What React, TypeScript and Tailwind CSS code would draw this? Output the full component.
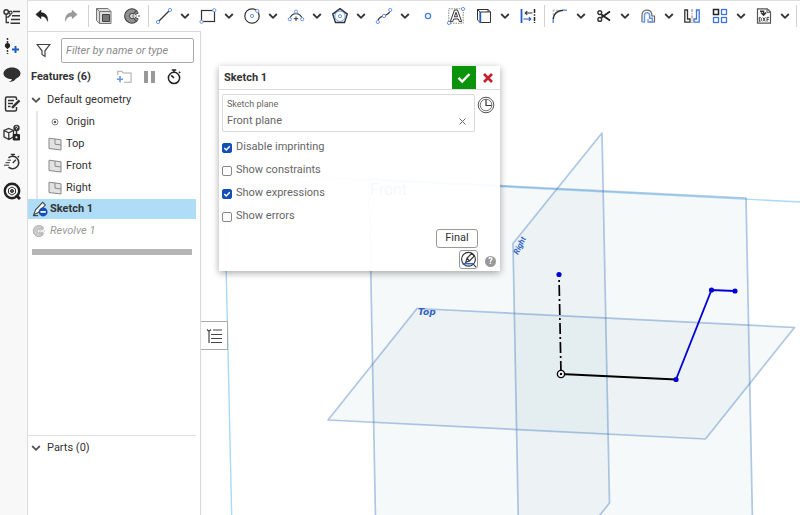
import React, { useState } from 'react';

type IconProps = { children: React.ReactNode; size?: number; className?: string };

function Icon({ children, size = 18, className = '' }: IconProps) {
  return (
    <svg
      width={size}
      height={size}
      viewBox="0 0 18 18"
      fill="none"
      stroke="#333"
      strokeWidth="1.2"
      aria-hidden="true"
      className={`shrink-0 ${className}`}
    >
      {children}
    </svg>
  );
}

const BLUE = '#6a97e6';

function Node({ x, y }: { x: number; y: number }) {
  return <circle cx={x} cy={y} r="1.6" fill="#fff" stroke={BLUE} strokeWidth="1" />;
}

function Chevron({ className = '' }: { className?: string }) {
  return (
    <svg width="10" height="8" viewBox="0 0 10 8" fill="none" stroke="currentColor" strokeWidth="1.8" aria-hidden="true" className={className}>
      <path d="M1.2 2 5 5.8 8.8 2" />
    </svg>
  );
}

function Tool({ label, children, menu = false }: { label: string; children: React.ReactNode; menu?: boolean }) {
  return (
    <div className={menu ? 'flex shrink-0 pr-0.5' : 'flex shrink-0'}>
      <button type="button" aria-label={label} className="flex h-7 w-7 items-center justify-center">
        {children}
      </button>
      {menu && (
        <button type="button" aria-label={`${label} options`} className="flex h-7 w-3.5 items-center justify-center text-[#333]">
          <Chevron />
        </button>
      )}
    </div>
  );
}

function Separator() {
  return <div className="mr-px ml-0.5 h-[22px] w-px shrink-0 bg-[#d2d2d2]" />;
}

function RevolveGlyph({ color = '#444', fill = '#8f8f8f' }: { color?: string; fill?: string }) {
  return (
    <>
      <path d="M13.6 3.6A7.2 7.2 0 1 0 13.6 14.4L10.4 10.9A2.4 2.4 0 1 1 10.4 7.1Z" fill={fill} stroke={color} strokeWidth="1.1" />
      <path d="M8.500 9H17" stroke={color} strokeDasharray="3 1.200 1 1.200" strokeWidth="1" />
      <path d="M10.4 7.1 13.6 3.6 15.2 6.2 12 7.600M10.4 10.9 13.6 14.4 15.2 11.800 12 10.400" fill={fill} stroke={color} strokeWidth="1" />
    </>
  );
}

function Toolbar() {
  return (
    <div role="toolbar" aria-label="Sketch tools" className="flex h-[31px] shrink-0 items-center overflow-hidden border-t border-[#dedede] bg-white">
      <div className="flex gap-px pr-px">
        <Tool label="Undo">
          <Icon><path d="M8 3 2.800 7.400 8 11.800V9.200C11.300 9 13.200 10.500 14.600 14.300 15.200 9 12.400 5.800 8 5.600Z" fill="#222" stroke="#222" strokeWidth="0.5" /></Icon>
        </Tool>
        <Tool label="Redo">
          <Icon><path d="M10 3 15.200 7.400 10 11.800V9.200C6.700 9 4.800 10.500 3.400 14.300 2.800 9 5.600 5.800 10 5.600Z" fill="#999" stroke="#999" strokeWidth="0.5" /></Icon>
        </Tool>
      </div>
      <Separator />
      <Tool label="Extrude">
        <Icon>
          <path d="M1.500 1.500H13L16 4.500V16.500H4.500L1.500 13.500Z" fill="#ddd" stroke="#777" strokeWidth="1" />
          <path d="M1.500 1.500 4.500 4.500H16M4.500 4.500V16.500" stroke="#777" strokeWidth="1" />
          <path d="M7.500 7.500H14.500V14.500H7.500Z" fill="#777" stroke="#444" strokeWidth="1" />
        </Icon>
      </Tool>
      <Tool label="Revolve"><Icon><RevolveGlyph /></Icon></Tool>
      <Separator />
      <Tool label="Line" menu>
        <Icon><path d="M3.500 14.500 14.500 3.500" /><Node x={3} y={15} /><Node x={15} y={3} /></Icon>
      </Tool>
      <Tool label="Rectangle" menu>
        <Icon><rect x="2.500" y="3.500" width="13" height="11" /><Node x={2.5} y={14.8} /><Node x={15.3} y={3.2} /></Icon>
      </Tool>
      <Tool label="Circle" menu>
        <Icon><circle cx="9" cy="9" r="7.200" /><Node x={9} y={9} /><Node x={14.3} y={4} /></Icon>
      </Tool>
      <Tool label="Arc" menu>
        <Icon><path d="M2.800 12A6.400 7 0 0 1 15.200 12" /><path d="M9 9.500V14M6.800 11.700H11.200" strokeWidth="1" /><Node x={2.8} y={12.2} /><Node x={15.2} y={12.2} /><Node x={9} y={4.7} /></Icon>
      </Tool>
      <Tool label="Polygon" menu>
        <Icon><path d="M9 1.600 16.300 7.100 13.500 15.500H4.500L1.700 7.100Z" strokeWidth="1.400" /><circle cx="9" cy="9.200" r="5.200" stroke={BLUE} strokeWidth="1" /><Node x={9} y={9.2} /></Icon>
      </Tool>
      <Tool label="Spline" menu>
        <Icon><path d="M3 14.500C3 9.500 7 9.800 9 8.800S14.800 7 15 3.500" /><Node x={2.8} y={15} /><Node x={9} y={9} /><Node x={15.2} y={3} /></Icon>
      </Tool>
      <Tool label="Point">
        <Icon><circle cx="9" cy="9" r="2.600" stroke="#4a7ddc" strokeWidth="1.300" /></Icon>
      </Tool>
      <Tool label="Text">
        <Icon>
          <rect x="1.800" y="1.800" width="14.400" height="14.400" stroke="#777" strokeDasharray="1.500 1" strokeWidth="0.900" />
          <path d="M3.300 14.600 7.500 3H10.500L14.700 14.600H12.300L11.400 12H6.600L5.700 14.600ZM7.400 9.800H10.600L9 5.400Z" fill="#fff" strokeWidth="1" />
          <Node x={16} y={2} /><Node x={2} y={16} />
        </Icon>
      </Tool>
      <Tool label="Use" menu>
        <Icon>
          <path d="M2.500 2.500H13L15.500 4.800V15.500H5.200L2.500 13ZM2.500 2.500 5.200 5H15.500M13 2.500V5" strokeWidth="1" />
          <path d="M5.300 5V15.500" stroke="#2458c5" strokeWidth="1.800" />
        </Icon>
      </Tool>
      <Tool label="Dimension">
        <Icon>
          <path d="M2.500 2V16" stroke="#2458c5" strokeWidth="1.800" />
          <path d="M15.500 2V16" stroke="#222" strokeWidth="1.500" strokeDasharray="4 1.200 1.500 1.200" />
          <path d="M13.500 6H6M8.200 4.200 6.200 6 8.200 7.800" strokeWidth="1.100" />
          <path d="M4.500 12H12M9.800 10.200 11.800 12 9.800 13.800" stroke="#2458c5" strokeWidth="1.100" />
        </Icon>
      </Tool>
      <Separator />
      <Tool label="Fillet" menu>
        <Icon>
          <path d="M2.200 12C2.600 6.500 6 3.600 12.500 3.200" strokeWidth="1.600" />
          <path d="M12 3.200H16M2.200 12V16" stroke={BLUE} strokeWidth="1.600" />
          <path d="M2.200 3.200H8M2.200 3.200V8" stroke="#999" strokeWidth="1" strokeDasharray="1.500 1.500" />
        </Icon>
      </Tool>
      <Tool label="Trim" menu>
        <Icon>
          <path d="M6 7.200 15 13.500M6 10.800 15 4.500" strokeWidth="1.900" stroke="#222" />
          <circle cx="4.800" cy="5.600" r="1.900" strokeWidth="1.400" /><circle cx="4.800" cy="12.400" r="1.900" strokeWidth="1.400" />
        </Icon>
      </Tool>
      <Tool label="Offset" menu>
        <Icon>
          <path d="M3 15V7.500A5 5 0 0 1 12.800 6.800V9H15.500V15H9.800" stroke="#666" strokeWidth="1.200" />
          <path d="M5.500 15V7.800A2.600 2.600 0 0 1 10.600 7.800V11.200H13.300V14" stroke={BLUE} strokeWidth="1.500" />
          <path d="M3 15H6M9 12V15H14" stroke={BLUE} strokeWidth="1.300" />
        </Icon>
      </Tool>
      <Tool label="Mirror">
        <Icon>
          <path d="M1.800 3H4.500V12H7V15.200H1.800Z" stroke="#333" strokeWidth="1.300" />
          <path d="M9 2V16" stroke="#777" strokeWidth="1" strokeDasharray="3 1.200 1 1.200" />
          <path d="M16.200 3H13.500V12H11V15.200H16.200Z" stroke="#3f74d8" strokeWidth="1.300" />
        </Icon>
      </Tool>
      <Tool label="Pattern" menu>
        <Icon>
          <rect x="2.500" y="2.500" width="5" height="5" stroke="#222" strokeWidth="1.500" />
          <rect x="10.500" y="2.500" width="5" height="5" stroke="#3f74d8" strokeWidth="1.300" />
          <rect x="2.500" y="10.500" width="5" height="5" stroke="#3f74d8" strokeWidth="1.300" />
          <rect x="10.500" y="10.500" width="5" height="5" stroke="#3f74d8" strokeWidth="1.300" />
        </Icon>
      </Tool>
      <Tool label="Insert DXF" menu>
        <Icon>
          <path d="M2.500 1.800H12.300L15.500 5V16.200H2.500Z" stroke="#555" />
          <path d="M12 2V5.300H15.300" stroke="#555" strokeWidth="1" />
          <path d="M5 4.200H8.600V7.500M6 5.500 8.600 8.200 11.200 5.500" strokeWidth="1.400" />
          <path d="M4.300 10.400V14.400H5.300L6.300 13.400V11.400L5.300 10.400ZM7.800 10.400 10.300 14.400M10.300 10.400 7.800 14.400M12 14.600V10.400H14.200M12 12.400H13.800" strokeWidth="0.900" />
        </Icon>
      </Tool>
      <Separator />
    </div>
  );
}

function RailButton({ label, children }: { label: string; children: React.ReactNode }) {
  return (
    <button type="button" aria-label={label} className="flex h-[29px] w-6 items-center justify-center">
      {children}
    </button>
  );
}

function Rail() {
  return (
    <nav aria-label="Document panels" className="flex w-7 shrink-0 flex-col border-r border-[#dcdcdc] bg-[#f8f8f8] pt-0.5">
      <RailButton label="Feature list">
        <Icon>
          <circle cx="3.200" cy="4" r="2.200" strokeWidth="1.500" /><circle cx="7.600" cy="4.600" r="1.500" strokeWidth="1.200" />
          <path d="M3.200 6.200V14.500H6M3.200 9.200H5.200L7.600 6.500" strokeWidth="1.300" />
          <path d="M10 3.500H17M9 7.800H17M8 11.600H17M7.500 15.200H17" strokeWidth="1.500" />
        </Icon>
      </RailButton>
      <RailButton label="Insert version">
        <Icon>
          <path d="M4.500 1V17" strokeDasharray="2 1" strokeWidth="1.500" /><circle cx="4.500" cy="8.500" r="2.600" fill="#222" stroke="none" />
          <path d="M12.500 9V16M9 12.500H16" stroke="#1b5cc4" strokeWidth="1.900" />
        </Icon>
      </RailButton>
      <RailButton label="Comments">
        <Icon><path d="M9 1.500C4.300 1.500 0.500 4.200 0.500 7.600 0.500 10.800 4.300 13.200 9 13.200 8.600 14.800 7 15.500 5.600 15.800 9 16.200 11.800 15 12.800 12.800 15.400 11.800 17.500 9.900 17.500 7.600 17.500 4.200 13.700 1.500 9 1.500Z" fill="#303030" stroke="none" /></Icon>
      </RailButton>
      <RailButton label="Notes">
        <Icon>
          <path d="M13.500 5V3.500Q13.500 2 12 2H4Q2.500 2 2.500 3.500V14.500Q2.500 16 4 16H12Q13.500 16 13.500 14.500V12" strokeWidth="1.500" />
          <path d="M5 5.500H11M5 8.500H10M5 11.500H7.500" strokeWidth="1.300" />
          <path d="M9 12.800 16.500 5.300" strokeWidth="2.400" />
        </Icon>
      </RailButton>
      <RailButton label="Part properties">
        <Icon>
          <path d="M5.800 4.500 10.500 6.500V12.800L5.800 15.500 1 12.800V6.500ZM1 6.500 5.800 8.800 10.500 6.500M5.800 8.800V15.500" strokeWidth="1.300" />
          <rect x="9.800" y="10" width="7.200" height="6.500" rx="1" fill="#222" stroke="none" /><circle cx="13.400" cy="13.300" r="1.100" fill="#fff" stroke="none" />
          <circle cx="13.500" cy="4" r="3.200" fill="#333" stroke="none" />
          <path d="M12.300 3.300Q12.400 2.300 13.500 2.300 14.700 2.400 14.600 3.400 14.500 4.100 13.500 4.500V5.300" stroke="#fff" strokeWidth="0.900" />
          <path d="M13.500 7V10" strokeWidth="1.500" />
        </Icon>
      </RailButton>
      <RailButton label="Timer">
        <Icon>
          <path d="M5.500 4.800A6.200 6.200 0 1 1 5.500 14.200" strokeWidth="1.600" />
          <path d="M9.800 1.300V3.500M7.800 1.400H12M14.800 3 16 4.200M9.800 10 12.800 6.800" strokeWidth="1.400" />
          <path d="M4.500 7.200H8M2.500 9.700H6.800M1 12.200H6" strokeWidth="1" />
        </Icon>
      </RailButton>
      <RailButton label="Learning center">
        <Icon>
          <circle cx="9" cy="9" r="7.200" strokeWidth="2.400" stroke="#222" /><path d="M13 13 17 17" stroke="#222" strokeWidth="3" />
          <path d="M5.500 7 9 5 12.500 7V11L9 13 5.500 11Z" strokeWidth="1" /><circle cx="9" cy="9" r="1.500" fill="#555" strokeWidth="1" />
        </Icon>
      </RailButton>
    </nav>
  );
}

function PlaneIcon() {
  return (
    <svg width="14" height="14" viewBox="0 0 14 14" fill="#e2e2e2" stroke="#888" aria-hidden="true" className="shrink-0">
      <path d="M1 1.200 13 2.800V13L1 11.500Z" />
      <path d="M7 2V7.200L13 8" fill="none" />
    </svg>
  );
}

function GeometryRow({ icon, label }: { icon: React.ReactNode; label: string }) {
  return (
    <li className="flex h-[22px] items-center gap-[3px] pl-[9px]">
      <span className="flex w-4 justify-center">{icon}</span>
      {label}
    </li>
  );
}

function FeaturePanel() {
  return (
    <aside className="flex w-[173px] shrink-0 flex-col border-t border-r border-[#d8d8d8] bg-white pr-1 text-[11px] text-[#333]">
      <div className="flex h-[37px] items-center gap-2.5 pl-2">
        <svg width="15" height="15" viewBox="0 0 15 15" fill="none" stroke="#444" strokeWidth="1.200" aria-hidden="true" className="shrink-0">
          <path d="M1.200 1.500H13.800L9 7.800V13.500L6 11.500V7.800Z" />
        </svg>
        <input
          type="text"
          aria-label="Filter features"
          placeholder="Filter by name or type"
          className="h-[25px] w-[133px] rounded-xs border border-[#aaa] px-1 italic outline-none placeholder:text-[#8b8b8b]"
        />
      </div>
      <div className="flex h-5 items-start pl-[3px]">
        <h2 className="w-[85px] leading-4 font-bold">Features (6)</h2>
        <div className="flex items-center gap-[9px]">
          <button type="button" aria-label="Create folder">
            <Icon size={16}>
              <path d="M2 7V2.500H6.500L8 4.500H17V15H9" stroke="#aaa" /><path d="M4.500 8V15M1 11.500H8" stroke="#6d98e6" strokeWidth="1.800" />
            </Icon>
          </button>
          <button type="button" aria-label="Suppress" className="flex h-4 w-4 items-center justify-center gap-[3px]">
            <span className="h-3 w-1 bg-[#999]" /><span className="h-3 w-1 bg-[#999]" />
          </button>
          <button type="button" aria-label="Regeneration times">
            <Icon size={16}>
              <circle cx="9" cy="10" r="6.300" stroke="#222" strokeWidth="1.700" />
              <path d="M9 1V4M6.500 1.200H11.500M14.500 3 16 4.500M9 10 5.800 7.200" stroke="#222" strokeWidth="1.700" />
            </Icon>
          </button>
        </div>
      </div>
      <div className="flex-1">
        <button type="button" aria-expanded="true" className="flex h-[22px] items-center gap-1.5 pl-[3px]">
          <Chevron className="text-[#555]" />
          Default geometry
        </button>
        <ul className="ml-2 border-l-2 border-[#e6e6e6]">
          <GeometryRow
            label="Origin"
            icon={<svg width="8" height="8" viewBox="0 0 8 8" fill="none" stroke="#888" aria-hidden="true"><circle cx="4" cy="4" r="3" /><circle cx="4" cy="4" r="1.200" fill="#555" stroke="none" /></svg>}
          />
          <GeometryRow label="Top" icon={<PlaneIcon />} />
          <GeometryRow label="Front" icon={<PlaneIcon />} />
          <GeometryRow label="Right" icon={<PlaneIcon />} />
        </ul>
        <div className="flex h-5 items-center gap-0.5 bg-[#afdcf6] pl-1 font-bold">
          <Icon size={16}>
            <path d="M2 15.500 4 10 12 1.500 15 4.500 7 13Z" fill="#fff" stroke="#444" /><path d="M1 16.500H7" />
            <circle cx="12.500" cy="12.300" r="5" fill="#1450b4" stroke="none" /><path d="M9.500 12.300H15.500" stroke="#fff" strokeWidth="2" />
          </Icon>
          Sketch 1
        </div>
        <div className="flex h-6 items-center gap-1 pl-1 text-[#999] italic">
          <Icon size={14}><RevolveGlyph color="#aaa" fill="#ccc" /></Icon>
          Revolve 1
        </div>
        <div className="mt-1.5 ml-1 h-1.5 w-40 bg-[#b5b5b5]" />
      </div>
      <div className="h-20 border-t border-[#dedede]">
        <button type="button" aria-expanded="true" className="flex h-6 items-center gap-1.5 pl-[3px]">
          <Chevron className="text-[#555]" />
          Parts (0)
        </button>
      </div>
    </aside>
  );
}

function Scene() {
  return (
    <svg aria-label="Sketch view" className="absolute inset-0 h-full w-full">
      <g transform="translate(-201 -31)">
        <path d="M800 202 224 172.500 232 530" fill="none" stroke="#a8daf5" strokeWidth="1.400" />
        <g fill="#2c7896" fillOpacity="0.042" stroke="#3f78bd" strokeOpacity="0.4" strokeWidth="1.700" strokeLinejoin="round">
          <path d="M369 179 746 198 753 545H376Z" />
          <path d="M602 133 513 243.500 518.500 530 588 530 609.500 503Z" />
          <path d="M417 308.500 328 420 705.500 439 794.500 327.500Z" />
        </g>
        <g fill="#2f62c0" fontFamily="Roboto, sans-serif">
          <text x="370" y="195" fontSize="16">Front</text>
          <text x="228" y="190" fontSize="15" fillOpacity="0.25">Sketch 1</text>
          <text x="418" y="315" fontSize="9" fontStyle="italic" fontWeight="700" fontFamily="DejaVu Sans, sans-serif">Top</text>
          <text transform="translate(518 255) rotate(-64)" fontSize="8" fontWeight="700" fontStyle="italic">Right</text>
        </g>
        <path d="M559 275 561 374" stroke="#000" strokeWidth="1.700" strokeDasharray="0 5 2 3 11 3 2 3 11 3 2 3 11 3 2 3 11 3 2 3 11 3 2 3 11" />
        <path d="M561 374 676 379.500" stroke="#000" strokeWidth="1.800" />
        <path d="M676 379.500 711.500 290 735 291" fill="none" stroke="#0000d6" strokeWidth="1.800" />
        <g fill="#0000d6">
          <circle cx="559" cy="274.500" r="2.600" />
          <circle cx="676" cy="379.500" r="2.600" />
          <circle cx="711.500" cy="290" r="2.600" />
          <circle cx="735" cy="291" r="2.600" />
        </g>
        <circle cx="561" cy="374" r="3.600" fill="#fff" stroke="#000" strokeWidth="1.400" />
        <circle cx="561" cy="374" r="1.200" />
      </g>
    </svg>
  );
}

function Option({ label, initial = false }: { label: string; initial?: boolean }) {
  const [checked, setChecked] = useState(initial);
  return (
    <label className="flex h-[23px] items-center gap-1">
      <span className="grid h-2.5 w-2.5">
        <input
          type="checkbox"
          checked={checked}
          onChange={() => setChecked(!checked)}
          className="col-start-1 row-start-1 block h-2.5 w-2.5 appearance-none rounded-[2px] border border-[#888] bg-white checked:border-[#1450b4] checked:bg-[#1450b4]"
        />
        {checked && (
          <svg width="10" height="10" viewBox="0 0 10 10" fill="none" stroke="#fff" strokeWidth="1.500" aria-hidden="true" className="pointer-events-none col-start-1 row-start-1">
            <path d="M2.300 5 4.300 7 7.800 3.200" />
          </svg>
        )}
      </span>
      {label}
    </label>
  );
}

function SketchDialog() {
  return (
    <section aria-label="Sketch 1" className="absolute top-[35px] left-[18px] w-[281px] bg-white/95 text-[11px] text-[#666] shadow-[0_2px_7px_rgba(0,0,0,0.35)]">
      <header className="flex h-6 items-center border-b border-[#dcdcdc] bg-white">
        <h2 className="flex-1 pt-0.5 pl-[5px] font-bold text-[#333]">Sketch 1</h2>
        <button type="button" aria-label="Accept" className="flex h-[23px] w-6 items-center justify-center bg-[#0b930b]">
          <svg width="14" height="12" viewBox="0 0 14 12" fill="none" stroke="#fff" strokeWidth="2.400" aria-hidden="true"><path d="M1.500 5.800 5.200 9.500 12.500 2" /></svg>
        </button>
        <button type="button" aria-label="Cancel" className="flex h-[23px] w-6 items-center justify-center">
          <svg width="10" height="10" viewBox="0 0 10 10" stroke="#c4202c" strokeWidth="2.600" aria-hidden="true"><path d="M1 1 9 9M9 1 1 9" /></svg>
        </button>
      </header>
      <div className="flex gap-0.5 pt-1 pl-[3px]">
        <div className="flex h-[38px] w-[253px] flex-col rounded-xs border border-[#dadada] bg-white px-1 pt-0.5">
          <label htmlFor="sketch-plane" className="text-[9px] leading-[14px]">Sketch plane</label>
          <div className="flex h-5 items-center">
            <input id="sketch-plane" type="text" defaultValue="Front plane" className="min-w-0 flex-1 outline-none" />
            <button type="button" aria-label="Clear sketch plane" className="flex h-4 w-4 items-center justify-center">
              <svg width="7" height="7" viewBox="0 0 7 7" stroke="#666" aria-hidden="true"><path d="M0.500 0.500 6.500 6.500M6.500 0.500 0.500 6.500" /></svg>
            </button>
          </div>
        </div>
        <button type="button" aria-label="Sketch history" className="h-[22px]">
          <Icon>
            <circle cx="9" cy="9" r="7.800" strokeWidth="1" stroke="#555" /><circle cx="9" cy="9" r="5.800" strokeWidth="0.900" stroke="#666" />
            <path d="M9 3.500V9.500H14.500" strokeWidth="1.200" />
          </Icon>
        </button>
      </div>
      <div className="pt-1 pl-[3px]">
        <Option label="Disable imprinting" initial />
        <Option label="Show constraints" />
        <Option label="Show expressions" initial />
        <Option label="Show errors" />
      </div>
      <div className="flex flex-col items-end gap-0.5 pt-px pr-1 pb-0.5">
        <button type="button" className="mr-[18px] h-[19px] w-[42px] rounded-[3px] border border-[#999] bg-white text-[#333]">Final</button>
        <div className="flex items-center gap-[7px]">
          <button type="button" aria-label="Look normal to sketch" className="flex h-[19px] w-[19px] items-center justify-center rounded-[3px] border border-[#999] bg-white">
            <Icon size={17}>
              <circle cx="9" cy="8.700" r="7.300" strokeWidth="1.200" />
              <path d="M6 12 7.500 7.500 12.500 2.500 15 5.500 10 10.500ZM7.500 7.500 10 10.500M14 14 17 17" />
              <path d="M2.500 13.500H15" stroke="#2a5fd0" strokeWidth="1.500" />
            </Icon>
          </button>
          <button type="button" aria-label="Help" className="mt-1 flex h-[11px] w-[11px] items-center justify-center rounded-full bg-[#999] text-[9px] leading-none font-bold text-white">?</button>
        </div>
      </div>
    </section>
  );
}

export default function App() {
  return (
    <div className="flex h-screen w-full overflow-hidden bg-white font-[Roboto,'Open_Sans',sans-serif]">
      <Rail />
      <div className="flex min-w-0 flex-1 flex-col">
        <Toolbar />
        <div className="flex min-h-0 flex-1">
          <FeaturePanel />
          <main className="relative min-w-0 flex-1 overflow-hidden">
            <Scene />
            <button type="button" aria-label="Toggle feature list" className="absolute top-[290px] left-0 flex h-[29px] w-[27px] items-center justify-center border border-l-0 border-[#aaa] bg-white">
              <svg width="17" height="16" viewBox="0 0 17 16" fill="none" stroke="#444" strokeWidth="1.200" aria-hidden="true">
                <path d="M1 1.500 3 3.500 5 1.500M7 2H16M3 4V15M5 6.500H16M5 10.500H16M5 14.500H16" />
              </svg>
            </button>
            <SketchDialog />
          </main>
        </div>
      </div>
    </div>
  );
}
